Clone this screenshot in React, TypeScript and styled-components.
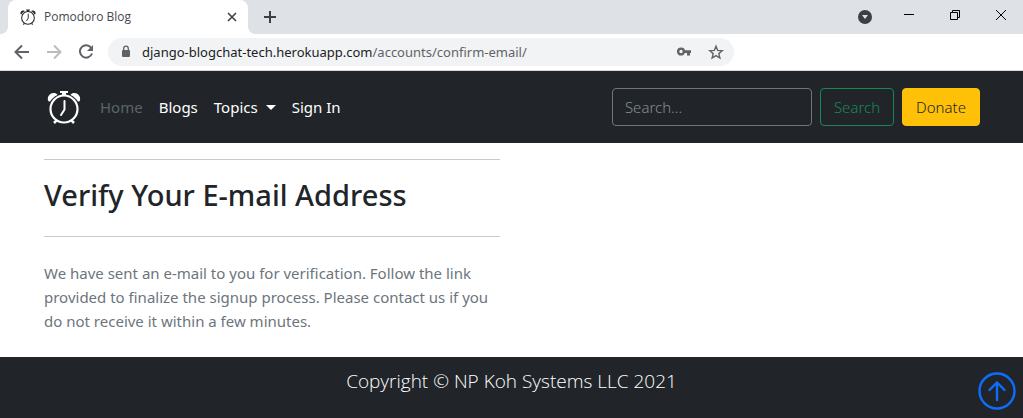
import React from "react";
import styled, { createGlobalStyle } from "styled-components";

const GlobalStyle = createGlobalStyle`
  *, *::before, *::after { box-sizing: border-box; }
  body {
    margin: 0;
    background: #fff;
    color: #212529;
    font-family: "Noto Sans", "Open Sans", sans-serif;
    font-size: 15px;
    line-height: 24px;
  }
  button, input { font: inherit; }
`;

const Page = styled.div`
  display: flex;
  flex-direction: column;
  min-height: 100vh;
`;

/* Browser window */

const TabStrip = styled.div`
  display: flex;
  align-items: stretch;
  height: 34px;
  padding-left: 8px;
  background: #dee1e6;
`;

const Tab = styled.div`
  position: relative;
  display: flex;
  align-items: center;
  gap: 8px;
  width: 240px;
  padding: 0 9px 0 12px;
  background: #fff;
  border-radius: 8px 8px 0 0;

  &::before, &::after {
    content: "";
    position: absolute;
    bottom: 0;
    width: 8px;
    height: 8px;
  }
  &::before {
    right: 100%;
    background: radial-gradient(circle at 0 0, transparent 8px, #fff 8px);
  }
  &::after {
    left: 100%;
    background: radial-gradient(circle at 100% 0, transparent 8px, #fff 8px);
  }
`;

const TabTitle = styled.span`
  flex: 1;
  color: #45494d;
  font-family: "Open Sans", sans-serif;
  font-size: 12px;
  line-height: 16px;
`;

const IconButton = styled.button<{ $width?: number }>`
  display: flex;
  align-items: center;
  justify-content: center;
  width: ${({ $width = 16 }) => $width}px;
  padding: 0;
  border: 0;
  background: none;
  color: #5f6368;
`;

const NewTab = styled(IconButton)`
  margin-left: 8px;
  color: #3c4043;
`;

const WindowControls = styled.div`
  display: flex;
  align-items: center;
  height: 30px;
  margin-left: auto;
  margin-right: -1px;
  color: #000;
`;

const WindowButton = styled(IconButton)`
  color: #000;
`;

const Toolbar = styled.div`
  display: flex;
  align-items: center;
  height: 37px;
  padding: 0 14px;
  gap: 16px;
  border-bottom: 1px solid #d5d7da;
`;

const AddressBar = styled.div`
  display: flex;
  align-items: center;
  width: 626px;
  height: 28px;
  margin-left: -2px;
  padding: 0 10px 0 12px;
  gap: 16px;
  border-radius: 14px;
  background: #f1f3f4;
  color: #5f6368;
`;

const Address = styled.span`
  flex: 1;
  font-size: 13px;
  line-height: 20px;
  margin-left: -6px;
`;

const Host = styled.span`
  color: #202124;
`;

/* Site */

const NavBar = styled.nav`
  display: flex;
  align-items: center;
  justify-content: space-between;
  padding: 16px 43px 16px 44px;
  background: #212529;
`;

const NavGroup = styled.div`
  display: flex;
  align-items: center;
  gap: 16px;
`;

const SearchForm = styled.form`
  display: flex;
  gap: 8px;
`;

const Brand = styled.a`
  display: flex;
  color: #fff;
`;

const NavLink = styled.a<{ $muted?: boolean }>`
  display: flex;
  align-items: center;
  gap: 8px;
  color: ${({ $muted }) => ($muted ? "#5c636a" : "#fff")};
  text-decoration: none;
`;

const Caret = styled.span`
  border-top: 5px solid;
  border-left: 5px solid transparent;
  border-right: 5px solid transparent;
`;

const SearchInput = styled.input`
  width: 200px;
  height: 38px;
  padding: 6px 12px;
  border: 1px solid #6c757d;
  border-radius: 4px;
  background: transparent;
  color: #fff;
  font-weight: 300;

  &::placeholder { color: #858d95; opacity: 1; }
`;

const NavButton = styled.button<{ $filled?: boolean }>`
  height: 38px;
  padding: 0 13px;
  border: 1px solid ${({ $filled }) => ($filled ? "#ffc107" : "#198754")};
  border-radius: 4px;
  background: ${({ $filled }) => ($filled ? "#ffc107" : "transparent")};
  color: ${({ $filled }) => ($filled ? "#212529" : "#198754")};
  font-weight: 300;
`;

const Main = styled.main`
  width: 50%;
  padding: 16px 12px 24px 44px;
`;

const Rule = styled.hr`
  height: 1px;
  margin: 0;
  border: 0;
  background: #c8c9ca;
`;

const Title = styled.h1`
  margin: 15px 0 21px;
  font-size: 29px;
  font-weight: 500;
  line-height: 40px;
`;

const Message = styled.p`
  margin: 24px 0 0;
  color: #6c757d;
`;

const Footer = styled.footer`
  flex: 1;
  padding: 12px 12px 24px;
  background: #212529;
  color: #fff;
  font-family: "Open Sans", sans-serif;
  font-size: 19px;
  font-weight: 300;
  text-align: center;
`;

const BackToTop = styled.a`
  position: fixed;
  right: 7px;
  bottom: 8px;
  display: flex;
  color: #0d6efd;
`;

const ClockIcon = ({ viewBox = "0 0 40 40", size }: { viewBox?: string; size: number }) => (
  <svg width={size} height={size} viewBox={viewBox} fill="none" stroke="currentColor" aria-hidden="true">
    <circle cx="20" cy="22" r="13.5" strokeWidth="2.2" />
    <path d="M16 4h8v2h-2v3h-4V6h-2z" fill="currentColor" stroke="none" />
    <path d="M4 13.5C3 9 6.500 5.500 10.500 6c1.500.2 2.500 1 3 2C10 9.500 7.500 12 6 14.500c-1 0-1.700-.4-2-1z" fill="currentColor" stroke="none" />
    <path d="M36 13.500C37 9 33.500 5.500 29.500 6c-1.500.2-2.500 1-3 2C30 9.500 32.500 12 34 14.500c1 0 1.700-.4 2-1z" fill="currentColor" stroke="none" />
    <path d="M12.500 33.500L10 36M27.500 33.500L30 36" strokeWidth="2.500" />
    <path d="M20.500 14v8.500L17 28" strokeWidth="2" strokeLinecap="round" />
  </svg>
);

export default function App() {
  return (
    <Page>
      <GlobalStyle />
      <TabStrip>
        <Tab>
          <ClockIcon size={16} viewBox="3 3 34 34" />
          <TabTitle>Pomodoro Blog</TabTitle>
          <IconButton aria-label="Close tab" $width={14}>
            <svg width="10" height="10" viewBox="0 0 10 10" stroke="#3c4043" strokeWidth="1.6">
              <path d="M1 1l8 8M9 1L1 9" />
            </svg>
          </IconButton>
        </Tab>
        <NewTab aria-label="New tab" $width={28}>
          <svg width="12" height="12" viewBox="0 0 12 12" stroke="currentColor" strokeWidth="2">
            <path d="M6 0v12M0 6h12" />
          </svg>
        </NewTab>
        <WindowControls>
          <WindowButton aria-label="Search tabs" $width={42}>
            <svg width="14" height="18" viewBox="0 0 14 18">
              <circle cx="7" cy="11" r="7" fill="#3c4043" />
              <path d="M4 9h6l-3 4z" fill="#dee1e6" />
            </svg>
          </WindowButton>
          <WindowButton aria-label="Minimize" $width={46}>
            <svg width="10" height="10" viewBox="0 0 10 10"><path d="M0 4h10v1H0z" /></svg>
          </WindowButton>
          <WindowButton aria-label="Restore" $width={46}>
            <svg width="10" height="10" viewBox="0 0 10 10" fill="none" stroke="currentColor">
              <path d="M.5 2.500h7v7h-7zM2.500 2.500v-2h7v7h-2" />
            </svg>
          </WindowButton>
          <WindowButton aria-label="Close" $width={46}>
            <svg width="10" height="10" viewBox="0 0 10 10" stroke="currentColor">
              <path d="M0 0l10 10M10 0L0 10" />
            </svg>
          </WindowButton>
        </WindowControls>
      </TabStrip>

      <Toolbar>
        <IconButton aria-label="Back">
          <svg width="16" height="16" viewBox="0 0 16 16" fill="none" stroke="currentColor" strokeWidth="2">
            <path d="M15 8H2M8 1.500L1.500 8 8 14.500" />
          </svg>
        </IconButton>
        <IconButton aria-label="Forward">
          <svg width="16" height="16" viewBox="0 0 16 16" fill="none" stroke="#babcbe" strokeWidth="2">
            <path d="M1 8h13M8 1.500L14.500 8 8 14.500" />
          </svg>
        </IconButton>
        <IconButton aria-label="Reload">
          <svg width="16" height="16" viewBox="0 0 16 16" fill="none" stroke="currentColor" strokeWidth="2">
            <path d="M13.300 4A6.200 6.200 0 1 0 14 9.500" />
            <path d="M15 1v6H9z" fill="currentColor" stroke="none" />
          </svg>
        </IconButton>
        <AddressBar>
          <svg width="12" height="14" viewBox="0 0 12 14" fill="none" aria-hidden="true">
            <rect x="2" y="5" width="8" height="7" rx="1" fill="currentColor" />
            <path d="M3.700 5.500V3.500a2.300 2.300 0 0 1 4.600 0v2" stroke="currentColor" strokeWidth="1.300" />
          </svg>
          <Address>
            <Host>django-blogchat-tech.herokuapp.com</Host>/accounts/confirm-email/
          </Address>
          <IconButton aria-label="Saved passwords">
            <svg width="16" height="16" viewBox="0 0 16 16" fill="none">
              <circle cx="5" cy="7.500" r="2.900" stroke="currentColor" strokeWidth="2.400" />
              <path d="M8 6.300h7V9h-1v2.500h-3V9H8z" fill="currentColor" />
            </svg>
          </IconButton>
          <IconButton aria-label="Bookmark this page">
            <svg width="16" height="16" viewBox="0 0 16 16" fill="none" stroke="currentColor" strokeWidth="1.400">
              <path d="M8 2.200l1.700 4.200 4.500.3-3.400 2.900 1.100 4.400L8 11.600 4.100 14l1.100-4.400L1.800 6.700l4.500-.3z" />
            </svg>
          </IconButton>
        </AddressBar>
      </Toolbar>

      <NavBar>
        <NavGroup>
          <Brand href="#" aria-label="Pomodoro Blog"><ClockIcon size={40} /></Brand>
          <NavLink href="#" $muted>Home</NavLink>
          <NavLink href="#">Blogs</NavLink>
          <NavLink href="#">Topics <Caret /></NavLink>
          <NavLink href="#">Sign In</NavLink>
        </NavGroup>
        <SearchForm>
          <SearchInput type="search" placeholder="Search..." aria-label="Search" />
          <NavButton type="button">Search</NavButton>
          <NavButton type="button" $filled>Donate</NavButton>
        </SearchForm>
      </NavBar>

      <Main>
        <Rule />
        <Title>Verify Your E-mail Address</Title>
        <Rule />
        <Message>
          We have sent an e-mail to you for verification. Follow the link provided to finalize the
          signup process. Please contact us if you do not receive it within a few minutes.
        </Message>
      </Main>

      <Footer>Copyright © NP Koh Systems LLC 2021</Footer>
      <BackToTop href="#" aria-label="Back to top">
        <svg width="38" height="38" viewBox="0 0 38 38" fill="none" stroke="currentColor" strokeWidth="2.400" strokeLinecap="round" strokeLinejoin="round">
          <circle cx="19" cy="19" r="17.500" />
          <path d="M19 28V10.500M11.500 18L19 10.500 26.500 18" />
        </svg>
      </BackToTop>
    </Page>
  );
}
